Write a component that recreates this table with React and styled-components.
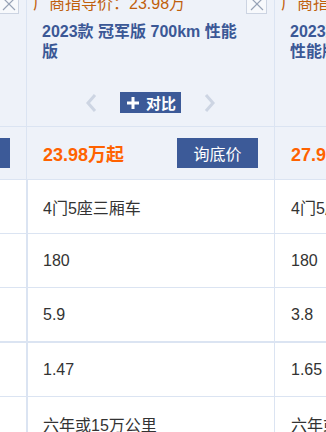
import styled, { createGlobalStyle } from "styled-components";

const GlobalStyle = createGlobalStyle`
  html, body {
    margin: 0;
    padding: 0;
    background: #fff;
    overflow: hidden;
  }
  body {
    font-family: "Liberation Sans", "Noto Sans CJK SC", sans-serif;
  }
`;

const line = "#dbe4f2";

const Viewport = styled.div`
  width: 326px;
  height: 432px;
  overflow: hidden;
`;

// scrolled table: offset like a scrolled comparison view
const Table = styled.div`
  margin: -12px 0 0 -221px;
  width: max-content;
`;

const Row = styled.div`
  display: flex;
  background: ${(p) => (p.$head ? "#eef2f9" : "#fff")};
  border-bottom: ${(p) => p.$sep || 1}px solid ${line};
`;

const Cell = styled.div`
  position: relative;
  box-sizing: border-box;
  width: 248px;
  flex: none;
  border-right: 1px solid ${line};
  padding: 0 16px;
  height: ${(p) => p.$h}px;
  display: flex;
  align-items: center;
  font-size: 16px;
  color: #333;
  box-shadow: ${(p) => (p.$edge ? `inset 1px 0 0 ${line}` : "none")};
`;

const HeadCell = styled.div`
  position: relative;
  box-sizing: border-box;
  width: 248px;
  flex: none;
  border-right: 1px solid ${line};
  padding: 6px 0 13px;
  display: flex;
  flex-direction: column;
`;

const Guide = styled.div`
  padding-left: 6px;
  font-size: 16px;
  line-height: 20px;
  color: #c0600c;
  white-space: nowrap;
`;

const Close = styled.button`
  position: absolute;
  top: 6px;
  right: 7px;
  width: 21px;
  height: 20px;
  padding: 0;
  box-sizing: border-box;
  border: 1px solid #ccd4e2;
  background: #f7f9fc;
  display: flex;
  align-items: center;
  justify-content: center;
`;

const Title = styled.div`
  margin-top: 8px;
  padding: 0 28px 0 15px;
  font-size: 16px;
  line-height: 20px;
  height: 40px;
  font-weight: bold;
  color: #3b5896;
`;

const Nav = styled.div`
  margin-top: 30px;
  display: flex;
  align-items: center;
  justify-content: center;
  gap: 23px;
  height: 21px;
`;

const Compare = styled.button`
  height: 21px;
  padding: 0 5px 0 6px;
  border: none;
  background: #3c5a98;
  color: #fff;
  font-family: inherit;
  font-size: 15px;
  font-weight: bold;
  display: flex;
  align-items: center;
  gap: 6px;
`;

const Price = styled.span`
  font-size: 18px;
  font-weight: bold;
  color: #ff6200;
`;

const Ask = styled.button`
  margin-left: auto;
  width: 81px;
  height: 30px;
  border: none;
  background: #3c5a98;
  color: #fff;
  font-family: inherit;
  font-size: 16px;
`;

const cars = [
  {
    guide: "厂商指导价：22.98万",
    title: "2023款 冠军版 605km 领先版",
    price: "22.98万起",
    specs: ["4门5座三厢车", "180", "5.9", "1.47", "六年或15万公里"],
  },
  {
    guide: "厂商指导价：23.98万",
    title: "2023款 冠军版 700km 性能版",
    price: "23.98万起",
    specs: ["4门5座三厢车", "180", "5.9", "1.47", "六年或15万公里"],
  },
  {
    guide: "厂商指导价：27.98万",
    title: "2023款 冠军版 605km 四驱 性能版",
    price: "27.98万起",
    specs: ["4门5座三厢车", "180", "3.8", "1.65", "六年或15万公里"],
  },
];

const Chevron = ({ dir }) => (
  <svg width="12" height="20" viewBox="0 0 12 20">
    <polyline
      points={dir === "left" ? "10,2 3,10 10,18" : "2,2 9,10 2,18"}
      fill="none"
      stroke="#cdd5e3"
      strokeWidth="3"
    />
  </svg>
);

const XIcon = () => (
  <svg width="14" height="14" viewBox="0 0 14 14">
    <path d="M1 1L13 13M13 1L1 13" stroke="#97a3b7" strokeWidth="1.2" />
  </svg>
);

const Plus = () => (
  <svg width="14" height="14" viewBox="0 0 14 14">
    <path d="M7 1V13M1 7H13" stroke="#fff" strokeWidth="3" />
  </svg>
);

const App = () => {
  return (
    <Viewport>
      <GlobalStyle />
      <Table>
        <Row $head>
          {cars.map((c, i) => (
            <HeadCell key={i}>
              <Guide>{c.guide}</Guide>
              <Close>
                <XIcon />
              </Close>
              <Title>{c.title}</Title>
              <Nav>
                <Chevron dir="left" />
                <Compare>
                  <Plus />
                  对比
                </Compare>
                <Chevron dir="right" />
              </Nav>
            </HeadCell>
          ))}
        </Row>
        <Row $head>
          {cars.map((c, i) => (
            <Cell key={i} $h={52}>
              <Price>{c.price}</Price>
              <Ask>询底价</Ask>
            </Cell>
          ))}
        </Row>
        {cars[0].specs.map((_, r) => (
          <Row key={r} $sep={r === 2 ? 2 : 1}>
            {cars.map((c, i) => (
              <Cell key={i} $h={53} $edge={i === 1}>
                {c.specs[r]}
              </Cell>
            ))}
          </Row>
        ))}
      </Table>
    </Viewport>
  );
};

export default App;
